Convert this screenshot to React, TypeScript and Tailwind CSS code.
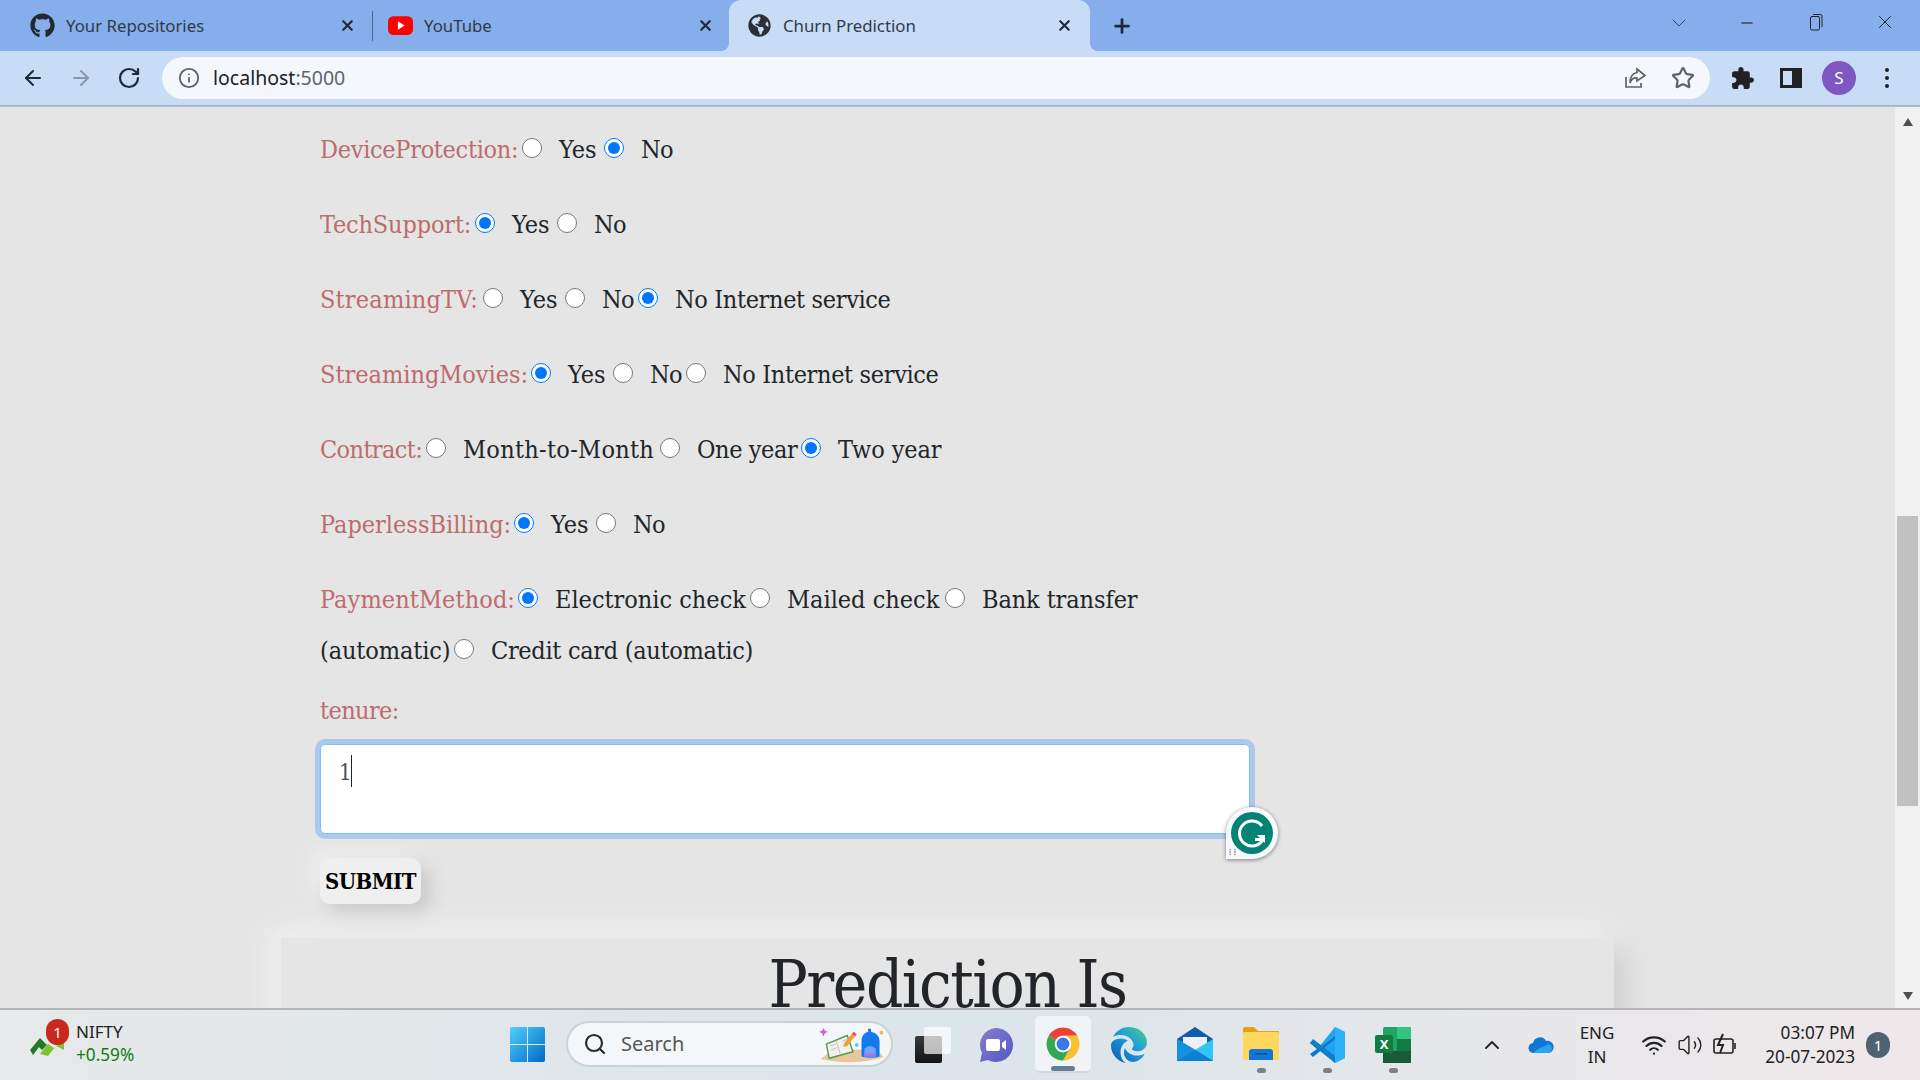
import React from "react";
import { ArrowLeft, ArrowRight, RotateCw, Info, Star, X, Plus, ChevronDown, ChevronUp, Minus, Search, Wifi, Volume2 } from "lucide-react";
import { FaGithub, FaGlobeAmericas } from "react-icons/fa";
import { FaEdge } from "react-icons/fa6";

function Radio({ name, checked }: { name: string; checked?: boolean }) {
  return <input type="radio" name={name} defaultChecked={checked} className="w-[20px] h-[20px] ml-[7px] mr-[17px] mb-[3px] shrink-0" />;
}

function Label({ className, children }: { className: string; children: React.ReactNode }) {
  return <span className={"text-[#bd6c6c] whitespace-nowrap " + className}>{children}</span>;
}

function Opt({ className, children }: { className: string; children: React.ReactNode }) {
  return <span className={"whitespace-nowrap " + className}>{children}</span>;
}

function Row({ children, last }: { children: React.ReactNode; last?: boolean }) {
  return <div className={"flex items-center h-[51px] " + (last ? "" : "mb-[24px]")}>{children}</div>;
}

function Form() {
  const yes = "w-[38px] tracking-[0px]";
  const no = "w-[32px] tracking-[-0.6px]";
  const no3 = "w-[29px] tracking-[-0.6px]";
  const nis = "w-[215px] tracking-[-0.35px]";
  return (
    <div className="pl-[320px] pt-[17px] text-[#212529] text-[25px] font-['DejaVu_Serif_Condensed','DejaVu_Serif',serif]">
      <Row>
        <Label className="w-[195px] tracking-[-0.3px]">DeviceProtection:</Label>
        <Radio name="dp" /><Opt className={yes}>Yes</Opt>
        <Radio name="dp" checked /><Opt className={no}>No</Opt>
      </Row>
      <Row>
        <Label className="w-[148px] tracking-[-0.15px]">TechSupport:</Label>
        <Radio name="ts" checked /><Opt className={yes}>Yes</Opt>
        <Radio name="ts" /><Opt className={no}>No</Opt>
      </Row>
      <Row>
        <Label className="w-[156px] tracking-[0.2px]">StreamingTV:</Label>
        <Radio name="tv" /><Opt className={yes}>Yes</Opt>
        <Radio name="tv" /><Opt className={no3}>No</Opt>
        <Radio name="tv" checked /><Opt className={nis}>No Internet service</Opt>
      </Row>
      <Row>
        <Label className="w-[204px] tracking-[0px]">StreamingMovies:</Label>
        <Radio name="sm" checked /><Opt className={yes}>Yes</Opt>
        <Radio name="sm" /><Opt className={no3}>No</Opt>
        <Radio name="sm" /><Opt className={nis}>No Internet service</Opt>
      </Row>
      <Row>
        <Label className="w-[99px] tracking-[-0.6px]">Contract:</Label>
        <Radio name="c" /><Opt className="w-[190px] tracking-[0.3px]">Month-to-Month</Opt>
        <Radio name="c" /><Opt className="w-[97px] tracking-[-0.4px]">One year</Opt>
        <Radio name="c" checked /><Opt className="w-[105px] tracking-[-0.1px]">Two year</Opt>
      </Row>
      <Row>
        <Label className="w-[187px] tracking-[0px]">PaperlessBilling:</Label>
        <Radio name="pb" checked /><Opt className={yes}>Yes</Opt>
        <Radio name="pb" /><Opt className={no}>No</Opt>
      </Row>
      <Row last>
        <Label className="w-[191px] tracking-[0.1px]">PaymentMethod:</Label>
        <Radio name="pm" checked /><Opt className="w-[188px] tracking-[0px]">Electronic check</Opt>
        <Radio name="pm" /><Opt className="w-[151px] tracking-[0px]">Mailed check</Opt>
        <Radio name="pm" /><Opt className="w-[155px] tracking-[-0.1px]">Bank transfer</Opt>
      </Row>
      <Row last>
        <Opt className="w-[127px] tracking-[-0.1px]">(automatic)</Opt>
        <Radio name="pm" /><Opt className="w-[259px] tracking-[-0.3px]">Credit card (automatic)</Opt>
      </Row>
      <div className="mt-[17px] mb-[15px] h-[36px] flex items-center"><Label className="w-[80px] tracking-[-0.6px]">tenure:</Label></div>
      <div className="relative w-[930px] h-[90px] bg-white border border-[#80bdff] rounded-[5px] shadow-[0_0_0_5px_rgba(0,123,255,0.25)] pl-[18px] pt-[10px] flex items-start">
        <span className="text-[#495057] text-[22px] leading-[36px]">1</span>
        <span className="w-px h-[32px] bg-[#222] -ml-[1px]" />
        <div className="absolute left-[905px] top-[62px] w-[52px] h-[52px] bg-[#f8f9fc] rounded-t-full rounded-br-full rounded-bl-[4px] shadow-[0_1px_4px_rgba(0,0,0,0.45)] flex items-center justify-center">
          <svg viewBox="0 0 42 42" className="w-[42px] h-[42px]">
            <circle cx="21" cy="21" r="21" fill="#028376" />
            <path d="M31 14 A12.5 12.5 0 1 0 32 27.5 L24 27.5" fill="none" stroke="#fff" strokeWidth="3" />
            <path d="M26 23 L34 23 L34 31 Z" fill="#fff" />
          </svg>
          <svg viewBox="0 0 6 6" className="absolute left-[3px] bottom-[3px] w-[7px] h-[8px]" fill="#9aa0b0">
            <circle cx="1" cy="1" r="0.8" /><circle cx="5" cy="1" r="0.8" /><circle cx="1" cy="3" r="0.8" /><circle cx="5" cy="3" r="0.8" /><circle cx="1" cy="5" r="0.8" /><circle cx="5" cy="5" r="0.8" />
          </svg>
        </div>
      </div>
      <button className="block mt-[24px] w-[101px] h-[46px] rounded-[10px] bg-[#efefef] shadow-[8px_8px_18px_#c8c8c8,-8px_-8px_18px_#f0f0f0] text-black font-bold text-[22px] tracking-[-0.5px] text-center">SUBMIT</button>
      <div className="mt-[34px] -ml-[39px] w-[1333px] h-[200px] bg-[#e5e5e5] shadow-[12px_12px_24px_#cfcfcf,-8px_-8px_24px_#f4f4f4] text-center text-[65px] leading-[80px] pt-[7px] text-[#212529] tracking-[-1.5px]">
        Prediction Is
      </div>
    </div>
  );
}

function Tabs() {
  const font = "text-[16.8px] text-[#2f3b4c] whitespace-nowrap font-['Noto_Sans',sans-serif]";
  return (
    <div className="h-[51px] bg-[#85aeea] flex items-stretch">
      <div className="w-[372px] flex items-center pl-[30px] pr-[16px]">
        <FaGithub className="w-[25px] h-[25px] text-[#24292f]" />
        <span className={"ml-[11px] " + font}>Your Repositories</span>
        <X className="ml-auto w-[17px] h-[17px] text-[#1f2937]" strokeWidth={3} />
      </div>
      <div className="w-px h-[30px] mt-[11px] bg-[#4d6483]" />
      <div className="w-[356px] flex items-center pl-[15px] pr-[15px]">
        <svg viewBox="0 0 24 24" className="w-[25px] h-[25px]"><rect x="0" y="3" width="24" height="18" rx="5" fill="#f00" /><path d="M9.5 8 L16 12 L9.5 16 Z" fill="#fff" /></svg>
        <span className={"ml-[11px] " + font}>YouTube</span>
        <X className="ml-auto w-[17px] h-[17px] text-[#1f2937]" strokeWidth={3} />
      </div>
      <div className="relative w-[361px] bg-[#c9dcf6] rounded-t-[12px] flex items-center pl-[19px] pr-[17px]">
        <svg viewBox="0 0 10 10" className="absolute -left-[8px] bottom-0 w-[8px] h-[8px]"><path d="M10 0 A10 10 0 0 1 0 10 L10 10 Z" fill="#c9dcf6" /></svg>
        <svg viewBox="0 0 10 10" className="absolute -right-[8px] bottom-0 w-[8px] h-[8px]"><path d="M0 0 A10 10 0 0 0 10 10 L0 10 Z" fill="#c9dcf6" /></svg>
        <FaGlobeAmericas className="w-[23px] h-[23px] text-[#2b2f36]" />
        <span className={"ml-[12px] " + font}>Churn Prediction</span>
        <X className="ml-auto w-[17px] h-[17px] text-[#1f2937]" strokeWidth={3} />
      </div>
      <div className="ml-[21px] flex items-center"><Plus className="w-[22px] h-[22px] text-[#1f2937]" strokeWidth={3} /></div>
      <div className="flex-1" />
      <div className="flex items-start pt-[11px]">
        <ChevronDown className="w-[24px] h-[24px] text-[#2f3b4c]" strokeWidth={0.9} />
        <Minus className="ml-[47px] mt-[3px] w-[18px] h-[18px] text-[#111]" strokeWidth={1.3} />
        <svg viewBox="0 0 18 18" className="ml-[51px] mt-[2px] w-[18px] h-[18px]" fill="none" stroke="#222" strokeWidth="1"><rect x="3.5" y="3.5" width="9" height="13.5" rx="1.5" /><path d="M6 1.5 H13.5 A1.5 1.5 0 0 1 15 3 V14" /></svg>
        <X className="ml-[49px] mr-[24px] w-[22px] h-[22px] text-[#111]" strokeWidth={1} />
      </div>
    </div>
  );
}

function Toolbar() {
  return (
    <div className="h-[54px] bg-[#c9dcf6] border-b-2 border-[#a8b8d2] box-content flex items-center">
      <ArrowLeft className="ml-[21px] w-[24px] h-[24px] text-[#1f2937]" strokeWidth={2} />
      <ArrowRight className="ml-[24px] w-[24px] h-[24px] text-[#8b97a8]" strokeWidth={2} />
      <RotateCw className="ml-[24px] w-[24px] h-[24px] text-[#1f2937]" strokeWidth={2.2} />
      <div className="ml-[21px] w-[1548px] h-[42px] rounded-full bg-[#f4f8fd] flex items-center pl-[16px] pr-[15px]">
        <Info className="w-[22px] h-[22px] text-[#5f6368]" strokeWidth={2} />
        <span className="ml-[13px] text-[19.5px] text-[#202124] font-['Noto_Sans',sans-serif]">localhost<span className="text-[#5f6368]">:5000</span></span>
        <svg viewBox="0 0 24 24" className="ml-auto w-[24px] h-[24px]" fill="none" stroke="#5f6368" strokeWidth="1.7"><path d="M3 11 V21 H18 V17" /><path d="M14 3 L22 9.5 L14 15 V12 C10 11.5 8 14 7 17 C7 11 9 7.5 14 6.5 Z" /></svg>
        <Star className="ml-[24px] w-[24px] h-[24px] text-[#5f6368]" strokeWidth={2.2} />
      </div>
      <svg viewBox="0 0 24 24" className="ml-[20px] w-[25px] h-[25px]" fill="#202124"><path d="M20.5 11H19V7c0-1.1-.9-2-2-2h-4V3.5C13 2.12 11.88 1 10.5 1S8 2.12 8 3.5V5H4c-1.1 0-1.99.9-1.99 2v3.8H3.5c1.49 0 2.7 1.21 2.7 2.7s-1.21 2.7-2.7 2.7H2V20c0 1.1.9 2 2 2h3.8v-1.5c0-1.49 1.21-2.7 2.7-2.7 1.49 0 2.7 1.21 2.7 2.7V22H17c1.1 0 2-.9 2-2v-4h1.5c1.38 0 2.5-1.12 2.5-2.5S21.88 11 20.5 11z" /></svg>
      <div className="ml-[25px] w-[22px] h-[20px] border-[3px] border-[#202124] border-r-[10px]" />
      <div className="ml-[20px] w-[34px] h-[34px] rounded-full bg-[#7e57c2] text-white text-[17px] flex items-center justify-center font-['Noto_Sans',sans-serif]">S</div>
      <div className="ml-[29px] flex flex-col gap-[4px]">
        <span className="w-[4px] h-[4px] rounded-full bg-[#202124]" />
        <span className="w-[4px] h-[4px] rounded-full bg-[#202124]" />
        <span className="w-[4px] h-[4px] rounded-full bg-[#202124]" />
      </div>
    </div>
  );
}

function Scrollbar() {
  return (
    <div className="w-[25px] shrink-0 bg-[#f1f1f1] flex flex-col items-center">
      <svg viewBox="0 0 10 8" className="mt-[11px] w-[10px] h-[8px]"><path d="M5 0 L10 8 L0 8 Z" fill="#505050" /></svg>
      <div className="mt-[390px] w-[21px] h-[290px] bg-[#c1c1c1]" />
      <div className="flex-1" />
      <svg viewBox="0 0 10 8" className="mb-[8px] w-[10px] h-[8px]"><path d="M0 0 L10 0 L5 8 Z" fill="#505050" /></svg>
    </div>
  );
}

function ChromeIcon() {
  return (
    <svg viewBox="0 0 48 48" className="w-[36px] h-[36px]">
      <circle cx="24" cy="24" r="22" fill="#fff" />
      <path d="M5 13 A22 22 0 0 1 43.05 13 L24 13 A11 11 0 0 0 14.47 18.5 Z" fill="#ea4335" />
      <path d="M24 13 L43.05 13 A22 22 0 0 1 24 46 L33.53 29.5 A11 11 0 0 0 24 13 Z" fill="#fbc02d" />
      <path d="M5 13 A22 22 0 0 0 24 46 L33.53 29.5 A11 11 0 0 1 14.47 18.5 Z" fill="#34a853" />
      <circle cx="24" cy="24" r="8.6" fill="#3b78e7" />
    </svg>
  );
}

function Taskbar() {
  return (
    <div className="h-[72px] border-t-2 border-[#b5b5b5] bg-gradient-to-r from-[#e7e9ea] via-[#dbe5ea] to-[#efe8ea] flex items-stretch relative font-['Noto_Sans',sans-serif]">
      <div className="w-[510px] shrink-0 flex pl-[30px] items-start">
        <div className="relative w-[36px] h-[70px]">
          <svg viewBox="0 0 36 20" className="absolute left-0 top-[26px] w-[36px] h-[20px]"><path d="M0 14 L10 2 L17 9 L12 14 L9 11 L3 19 Z" fill="#217a22" /><path d="M10 18 L18 8 L24 12 L34 2 L34 14 L26 10 L18 20 Z" fill="#7ac52f" /></svg>
          <span className="absolute left-[16px] top-[9px] w-[23px] h-[26px] rounded-full bg-[#c9281e] text-white text-[15px] flex items-center justify-center">1</span>
        </div>
        <div className="ml-[10px] flex flex-col pt-[11px]">
          <span className="text-[17px] leading-[22px] text-[#222]">NIFTY</span>
          <span className="text-[17.2px] leading-[24px] text-[#107c10]">+0.59%</span>
        </div>
      </div>
      <div className="flex items-start pt-[17px]">
        <svg viewBox="0 0 35 35" className="w-[35px] h-[35px]">
          <defs><linearGradient id="win" x1="0" y1="0" x2="1" y2="1"><stop offset="0" stopColor="#4fd0fb" /><stop offset="1" stopColor="#0069c8" /></linearGradient></defs>
          <path d="M0 2 a2 2 0 0 1 2-2 H17 V17 H0 Z M18 0 H33 a2 2 0 0 1 2 2 V17 H18 Z M0 18 H17 V35 H2 a2 2 0 0 1-2-2 Z M18 18 H35 V33 a2 2 0 0 1-2 2 H18 Z" fill="url(#win)" />
        </svg>
      </div>
      <div className="ml-[21px] mt-[11px] w-[327px] h-[46px] rounded-full bg-[#f3f7f9] border-2 border-[#c9d3d6] flex items-center pl-[15px] relative">
        <Search className="w-[24px] h-[24px] text-[#2b2b2b]" strokeWidth={2.2} />
        <span className="ml-[14px] text-[20px] text-[#555]">Search</span>
        <svg viewBox="0 0 70 40" className="absolute right-[4px] top-[3px] w-[70px] h-[38px]">
          <path d="M2 35 Q12 25 22 25 H58 Q65 27 68 33 Q40 42 2 35 Z" fill="#e8c79a" />
          <path d="M8 19 L30 10 L36 27 L11 34 Z" fill="#f2f0ea" stroke="#4f9a5a" strokeWidth="1.5" />
          <path d="M18 15 L23 30 M12 21 L18 19 M13 25 L19 23 M25 16 L30 14 M26 20 L31 18" stroke="#b5b5b5" strokeWidth="0.8" fill="none" />
          <path d="M35 8 L38 11 L30 21 L26 22 L27 18 Z" fill="#f0a030" />
          <path d="M35 8 L37 6 L40 9 L38 11 Z" fill="#f05050" />
          <path d="M45 16 Q45 8 52 6 V3 H55 V6 Q64 8 64 16 V32 Q55 35 45 32 Z" fill="#1478f0" />
          <path d="M48 32 V24 Q54 18 60 24 V32 Z" fill="#6fa8f8" />
          <path d="M48 29 H60 V32 H48 Z" fill="#b070e8" />
          <path d="M5 2 L6.5 5 L9.5 6 L6.5 7.5 L5 11 L3.5 7.5 L0.5 6 L3.5 5 Z" fill="#c75fe0" />
          <circle cx="40" cy="20" r="2" fill="#58d0e8" />
          <circle cx="66" cy="7" r="2" fill="#f9b530" />
        </svg>
      </div>
      <div className="ml-[22px] relative w-[37px] mt-[17px] h-[36px]">
        <div className="absolute left-0 top-[9px] w-[27px] h-[27px] rounded-[2px] bg-gradient-to-b from-[#3a3a3a] to-[#141414]" />
        <div className="absolute left-[9px] top-0 w-[27px] h-[27px] rounded-[2px] bg-white/70" />
      </div>
      <div className="ml-[26px] mt-[17px] w-[36px] h-[36px]">
        <svg viewBox="0 0 36 36" className="w-[36px] h-[36px]">
          <defs><linearGradient id="teams" x1="0" y1="0" x2="1" y2="1"><stop offset="0" stopColor="#8b7cc8" /><stop offset="1" stopColor="#5059c9" /></linearGradient></defs>
          <path d="M18 1 A17 17 0 1 1 10 33 L2 35 L4 26 A17 17 0 0 1 18 1 Z" fill="url(#teams)" />
          <rect x="8" y="12" width="14" height="12" rx="2" fill="#fff" />
          <path d="M24 16 L28 13 V23 L24 20 Z" fill="#fff" />
        </svg>
      </div>
      <div className="ml-[21px] mt-[6px] w-[56px] h-[57px] relative rounded-[5px] bg-[#f0f4f6] border-b-2 border-[#d2d8db] flex items-start justify-center pt-[10px]">
        <ChromeIcon />
        <span className="absolute left-[16px] bottom-0 w-[24px] h-[5px] rounded-full bg-[#667f90]" />
      </div>
      <div className="ml-[20px] mt-[17px] w-[36px] h-[36px]">
        <svg width="0" height="0" className="absolute"><defs><linearGradient id="edge" x1="0" y1="1" x2="1" y2="0"><stop offset="0" stopColor="#0c59a4" /><stop offset="0.55" stopColor="#1b9de2" /><stop offset="1" stopColor="#52d17a" /></linearGradient></defs></svg>
        <FaEdge className="w-[36px] h-[36px]" fill="url(#edge)" />
      </div>
      <div className="ml-[30px] mt-[17px] w-[36px] h-[36px]">
        <svg viewBox="0 0 36 36" className="w-[36px] h-[36px]">
          <path d="M0 12 L18 0 L36 12 V24 H0 Z" fill="#0f5cab" />
          <path d="M6 10 H30 V20 L18 28 L6 20 Z" fill="#eef1f4" />
          <path d="M0 12 L18 23 L36 12 V34 H0 Z" fill="#32c5f4" />
          <path d="M0 12 L22 25 L36 34 H0 Z" fill="#1490df" />
          <path d="M0 34 L18 23 L36 34 Z" fill="#0f7fd2" />
        </svg>
      </div>
      <div className="ml-[30px] mt-[17px] w-[36px] h-[36px] relative">
        <svg viewBox="0 0 36 36" className="w-[36px] h-[36px]">
          <path d="M0 2 a2 2 0 0 1 2-2 H11 L15 4 H36 V12 H0 Z" fill="#e2a40f" />
          <rect x="0" y="5" width="36" height="28" rx="1.5" fill="#ffd75e" />
          <path d="M6 33 V25 a3 3 0 0 1 3-3 H27 a3 3 0 0 1 3 3 V33 Z" fill="#0f78d4" />
          <rect x="12" y="26" width="12" height="1.5" fill="#0a4f96" />
        </svg>
        <span className="absolute left-[14px] top-[41px] w-[9px] h-[5px] rounded-full bg-[#808080]" />
      </div>
      <div className="ml-[30px] mt-[17px] w-[36px] h-[36px] relative">
        <svg viewBox="0 0 36 36" className="w-[36px] h-[36px]">
          <path d="M26 0 L36 5 V31 L26 36 L10 20 Z" fill="#22a5f1" />
          <path d="M26 0 L26 36 L36 31 V5 Z" fill="#2fb1f7" />
          <path d="M26 9 L12 20 L4 14 L1 16 L8 22 L1 27 L4 30 L26 12 Z" fill="#0c78c8" />
          <path d="M4 12 L26 29 V36 L1 16 Z" fill="#0e7ecb" />
        </svg>
        <span className="absolute left-[14px] top-[41px] w-[9px] h-[5px] rounded-full bg-[#808080]" />
      </div>
      <div className="ml-[30px] mt-[17px] w-[36px] h-[36px] relative">
        <svg viewBox="0 0 36 36" className="w-[36px] h-[36px]">
          <rect x="8" y="0" width="28" height="36" rx="2" fill="#21a366" />
          <rect x="22" y="0" width="14" height="12" fill="#33c481" />
          <rect x="22" y="12" width="14" height="12" fill="#107c41" />
          <rect x="8" y="24" width="28" height="12" fill="#185c37" />
          <rect x="0" y="8" width="18" height="18" rx="2" fill="#107c41" />
        </svg>
        <span className="absolute left-[3px] top-[9px] w-[12px] text-center text-white text-[13px] font-bold leading-[16px]">X</span>
        <span className="absolute left-[14px] top-[41px] w-[9px] h-[5px] rounded-full bg-[#808080]" />
      </div>
      <div className="flex-1" />
      <div className="flex items-center h-[70px] text-[#222]">
        <ChevronUp className="w-[24px] h-[24px]" strokeWidth={1.8} />
        <svg viewBox="0 0 26 18" className="ml-[24px] w-[26px] h-[18px]"><path d="M6 17 a5 5 0 0 1 -1 -10 a7 7 0 0 1 13 -2 a6 6 0 0 1 3 12 Z" fill="#0f78d4" /><path d="M5 17 H21 a5 5 0 0 0 0 -9 L10 13 Z" fill="#2ca3ee" /></svg>
        <div className="ml-[25px] w-[36px] flex flex-col items-center text-[17px] leading-[24px]"><span>ENG</span><span>IN</span></div>
        <Wifi className="ml-[26px] w-[26px] h-[26px]" strokeWidth={2} />
        <Volume2 className="ml-[10px] w-[26px] h-[26px]" strokeWidth={1.3} />
        <svg viewBox="0 0 26 24" className="ml-[9px] w-[26px] h-[24px]" fill="none" stroke="#222" strokeWidth="1.6"><rect x="2" y="6" width="19" height="14" rx="2" /><path d="M23 10 V16" /><path d="M11 1 L6 12 H11 L8 20" strokeWidth="2" /></svg>
        <div className="ml-[1px] w-[116px] flex flex-col items-end text-[17.2px] leading-[24px]"><span>03:07 PM</span><span>20-07-2023</span></div>
        <div className="ml-[11px] mr-[30px] w-[24px] h-[26px] rounded-full bg-[#4f6272] text-white text-[15px] flex items-center justify-center">1</div>
      </div>
    </div>
  );
}

export default function App() {
  return (
    <div className="w-[1920px] h-[1080px] overflow-hidden flex flex-col bg-[#e5e5e5]">
      <Tabs />
      <Toolbar />
      <div className="flex-1 min-h-0 flex">
        <div className="flex-1 min-w-0 overflow-hidden"><Form /></div>
        <Scrollbar />
      </div>
      <Taskbar />
    </div>
  );
}
